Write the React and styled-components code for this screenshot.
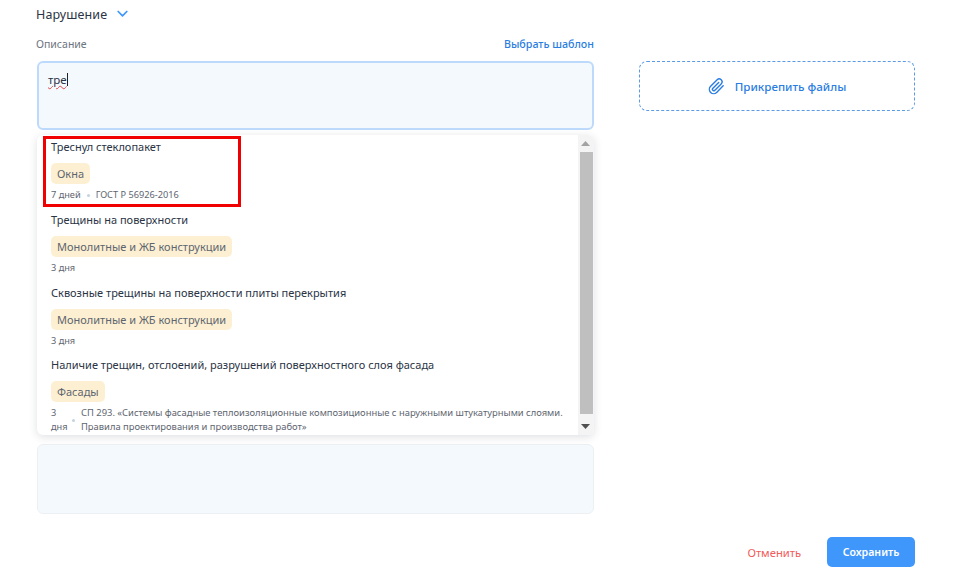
import React from "react";
import styled, { createGlobalStyle } from "styled-components";

const Global = createGlobalStyle`
  html, body { margin: 0; padding: 0; background: #fff; }
  body { font-family: "Noto Sans", "Open Sans", sans-serif; overflow: hidden; }
`;
const Page = styled.div`
  width: 958px; height: 583px; box-sizing: border-box; padding: 0 43px 0 37px;
  display: flex; flex-direction: column;
`;
const Columns = styled.div`display: flex; gap: 45px; align-items: flex-start;`;
const Main = styled.div`width: 557px; display: flex; flex-direction: column;`;
const Side = styled.div`width: 276px; padding-top: 61px;`;
const Heading = styled.div`
  height: 28px; display: flex; align-items: center; gap: 10px; margin-left: -1px;
  font-size: 12.5px; color: #2b3445; letter-spacing: .1px;
`;
const LabelRow = styled.div`
  height: 33px; display: flex; justify-content: space-between; align-items: center; padding-bottom: 2px; box-sizing: border-box;
`;
const Label = styled.span`font-size: 10.5px; color: #6b7480; margin-left: -1px;`;
const LinkText = styled.span`font-size: 10.7px; color: #2a7de1; font-weight: 500;`;
const FieldWrap = styled.div`position: relative;`;
const Field = styled.div`
  box-sizing: border-box; height: ${p => p.$h}px; border-radius: 6px; background: #f4f9fd;
  border: ${p => p.$active ? "2px solid #bddafc" : "1px solid #edf0f3"};
  padding: 9px 9px; font-size: 11.5px; color: #2b3445; line-height: 16px;
  margin-top: ${p => p.$mt || 0}px;
`;
const Typed = styled.span`
  display: inline-block; border-right: 1px solid #222; line-height: 13px;
  text-decoration: underline wavy #e24a4a 1px; text-underline-offset: 1px;
`;
const Dropdown = styled.div`
  position: absolute; left: 0; top: 74px; width: 557px; height: 300px; display: flex;
  background: #fff; border-radius: 6px; overflow: hidden;
  box-shadow: 0 2px 8px rgba(40, 50, 70, .15);
`;
const List = styled.div`flex: 1; min-width: 0; padding-top: 3px;`;
const Item = styled.div`
  height: ${p => p.$h}px; box-sizing: border-box; padding: 0 14px;
  display: flex; flex-direction: column; align-items: flex-start;
`;
const Title = styled.div`font-size: 11px; line-height: 17px; color: #2b3445; margin-bottom: 8px; white-space: nowrap;`;
const Chip = styled.span`
  background: #fdf0d2; color: #5e6570; font-size: 11px; line-height: 21px; height: 21px;
  padding: 0 6px; border-radius: 5px; white-space: nowrap;
`;
const Meta = styled.div`
  display: flex; align-items: center; margin-top: 4px; font-size: 9.2px; line-height: 14px; color: #5e6570;
`;
const Days = styled.span`width: 15px; flex: none;`;
const Dot = styled.span`
  width: 3px; height: 3px; border-radius: 50%; background: #c6d3e0; margin: 0 6px; flex: none;
`;
const Doc = styled.span`width: 490px; font-size: 9.4px;`;
const Track = styled.div`
  width: 16px; flex: none; background: #f4f4f4; display: flex; flex-direction: column; align-items: flex-end;
  box-sizing: border-box; padding-right: 1px;
`;
const Arrow = styled.div`
  height: 17px; width: 100%; display: flex; align-items: center; justify-content: center; flex: none;
`;
const Thumb = styled.div`width: 13px; height: 262px; background: #bfbfbf; flex: none;`;
const TrackSpace = styled.div`flex: 1;`;
const RedBox = styled.div`
  position: absolute; left: 6px; top: 75px; width: 198px; height: 71px; box-sizing: border-box;
  border: 3px solid #f00000; pointer-events: none; z-index: 3;
`;
const Attach = styled.div`
  box-sizing: border-box; height: 50px; border: 1px dashed #5a9ae6; border-radius: 8px;
  display: flex; align-items: center; justify-content: center; gap: 10px;
  font-size: 11.6px; color: #2a7de1; font-weight: 500;
`;
const Footer = styled.div`
  display: flex; justify-content: flex-end; align-items: center; gap: 26px; margin-top: 23px;
`;
const Cancel = styled.span`font-size: 11.2px; color: #f25b5b;`;
const Save = styled.div`
  width: 88px; height: 30px; border-radius: 5px; background: #3f97fb; color: #fff;
  display: flex; align-items: center; justify-content: center; font-size: 10.6px; font-weight: 600;
`;

const Chevron = () => (
  <svg width="11" height="8" viewBox="0 0 11 8"><path d="M1.2 1.5 5.5 5.8l4.3-4.3" fill="none" stroke="#3f97fb" strokeWidth="1.7" strokeLinecap="round" strokeLinejoin="round" /></svg>
);
const Clip = () => (
  <svg width="17" height="17" viewBox="0 0 24 24" fill="none" stroke="#2a7de1" strokeWidth="2" strokeLinecap="round" strokeLinejoin="round">
    <path d="M21.4 11.1l-9.2 9.2a6 6 0 0 1-8.5-8.5l9.2-9.2a4 4 0 0 1 5.7 5.7l-9.2 9.2a2 2 0 0 1-2.8-2.8l8.5-8.5" />
  </svg>
);

export default function App() {
  return (
    <Page>
      <Global />
      <Columns>
        <Main>
          <Heading>Нарушение <Chevron /></Heading>
          <LabelRow><Label>Описание</Label><LinkText>Выбрать шаблон</LinkText></LabelRow>
          <FieldWrap>
            <Field $h={69} $active><Typed>тре</Typed></Field>
            <RedBox />
            <Dropdown>
              <List>
                <Item $h={73}>
                  <Title>Треснул стеклопакет</Title>
                  <Chip>Окна</Chip>
                  <Meta><span>7 дней</span><Dot /><span>ГОСТ Р 56926-2016</span></Meta>
                </Item>
                <Item $h={73}>
                  <Title>Трещины на поверхности</Title>
                  <Chip>Монолитные и ЖБ конструкции</Chip>
                  <Meta><span>3 дня</span></Meta>
                </Item>
                <Item $h={72}>
                  <Title>Сквозные трещины на поверхности плиты перекрытия</Title>
                  <Chip>Монолитные и ЖБ конструкции</Chip>
                  <Meta><span>3 дня</span></Meta>
                </Item>
                <Item $h={79}>
                  <Title>Наличие трещин, отслоений, разрушений поверхностного слоя фасада</Title>
                  <Chip>Фасады</Chip>
                  <Meta>
                    <Days>3 дня</Days>
                    <Dot />
                    <Doc>СП 293. «Системы фасадные теплоизоляционные композиционные с наружными штукатурными слоями. Правила проектирования и производства работ»</Doc>
                  </Meta>
                </Item>
              </List>
              <Track>
                <Arrow><svg width="9" height="5" viewBox="0 0 9 5"><path d="M4.5 0 9 5H0z" fill="#a3a3a3" /></svg></Arrow>
                <Thumb />
                <TrackSpace />
                <Arrow><svg width="9" height="5" viewBox="0 0 9 5"><path d="M0 0h9L4.5 5z" fill="#505050" /></svg></Arrow>
              </Track>
            </Dropdown>
          </FieldWrap>
          <Field $h={70} $mt={314} />
        </Main>
        <Side>
          <Attach><Clip />Прикрепить файлы</Attach>
        </Side>
      </Columns>
      <Footer>
        <Cancel>Отменить</Cancel>
        <Save>Сохранить</Save>
      </Footer>
    </Page>
  );
}
